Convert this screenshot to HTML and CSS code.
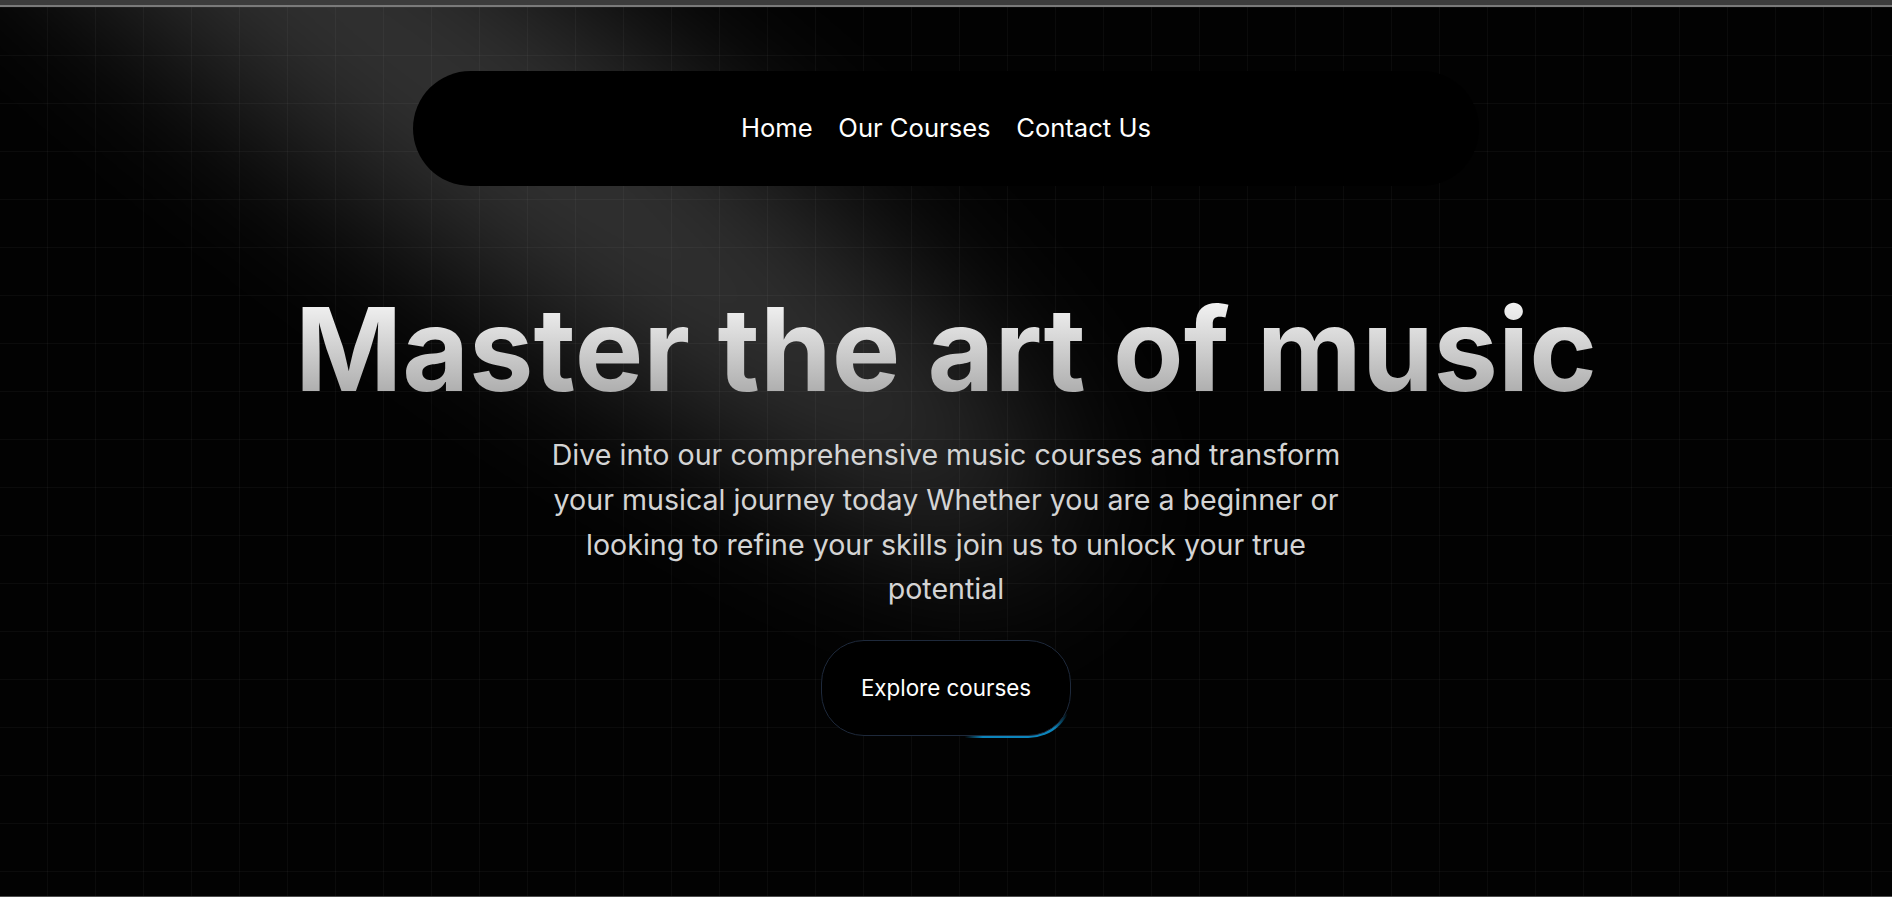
FILE: index.html
```html
<!DOCTYPE html>
<html lang="en">
<head>
<meta charset="utf-8">
<title>Music School</title>
<link rel="stylesheet" href="styles.css">
</head>
<body>
<div class="topbar"></div>
<main class="page">
  <div class="spotlight"></div>
  <nav class="nav">
    <a class="nav-item" href="#">Home</a>
    <a class="nav-item" href="#">Our Courses</a>
    <a class="nav-item" href="#">Contact Us</a>
  </nav>
  <section class="hero">
    <h1 class="title">Master the art of music</h1>
    <p class="lead">Dive into our comprehensive music courses and transform your musical journey today Whether you are a beginner or looking to refine your skills join us to unlock your true potential</p>
    <div class="cta-wrap">
      <a class="cta" href="#">
        <span class="cta-glow"></span>
        <span class="cta-inner">Explore courses</span>
      </a>
    </div>
  </section>
</main>
</body>
</html>
```

FILE: styles.css
```css
html, body {
  margin: 0;
  padding: 0;
  background: #000;
}

body {
  font-family: Inter, "Noto Sans", "Liberation Sans", sans-serif;
  -webkit-font-smoothing: antialiased;
}

.topbar {
  height: 5px;
  background: #3c3c3c;
  border-bottom: 2px solid #7a7a7a;
}

.page {
  position: relative;
  box-sizing: border-box;
  height: 890px;
  overflow: hidden;
  background-color: #020202;
  background-image:
    linear-gradient(to right, transparent 47px, rgba(255, 255, 255, 0.035) 47px, rgba(255, 255, 255, 0.035) 48px),
    linear-gradient(to bottom, transparent 47px, rgba(255, 255, 255, 0.035) 47px, rgba(255, 255, 255, 0.035) 48px);
  background-size: 48px 48px;
  background-position: 0 1px;
  border-bottom: 1px solid #4d4d4d;
}

.spotlight {
  position: absolute;
  left: -330px;
  top: -70px;
  width: 1540px;
  height: 280px;
  border-radius: 50%;
  background: #fff;
  opacity: 0.19;
  filter: blur(80px);
  transform: rotate(37deg);
  pointer-events: none;
}

.nav {
  position: relative;
  z-index: 2;
  box-sizing: border-box;
  width: 1066px;
  height: 115.2px;
  margin: 64px auto 0;
  padding: 0 51.2px;
  display: flex;
  align-items: center;
  justify-content: center;
  gap: 25.6px;
  background: #000;
  border-radius: 9999px;
}

.nav-item {
  color: #fff;
  text-decoration: none;
  font-size: 25.6px;
  line-height: 38.4px;
}

.hero {
  position: relative;
  z-index: 1;
  padding: 106px 25.6px 0;
  text-align: center;
}

.title {
  margin: 0;
  font-size: 115.2px;
  line-height: 1;
  font-weight: 700;
  background-image: linear-gradient(to bottom, #fafafa, #a3a3a3);
  -webkit-background-clip: text;
  background-clip: text;
  color: transparent;
}

.lead {
  margin: 25.6px auto 0;
  max-width: 819.2px;
  font-size: 28.6px;
  line-height: 44.8px;
  font-weight: 400;
  color: #d4d4d4;
}

.cta-wrap {
  margin-top: 25.6px;
  display: flex;
  justify-content: center;
}

.cta {
  position: relative;
  display: block;
  box-sizing: border-box;
  width: 254px;
  height: 100px;
  padding: 2px;
  border-radius: 44.8px;
  overflow: hidden;
  text-decoration: none;
}

.cta-glow {
  position: absolute;
  left: 136px;
  top: 36px;
  width: 128px;
  height: 128px;
  background: radial-gradient(#0ea5e9 40%, transparent 60%);
  opacity: 0.8;
}

.cta-inner {
  position: relative;
  box-sizing: border-box;
  display: flex;
  align-items: center;
  justify-content: center;
  height: 100%;
  background: #000;
  border: 1px solid #1e293b;
  border-radius: 43px;
  color: #fff;
  font-size: 22.4px;
}
```
